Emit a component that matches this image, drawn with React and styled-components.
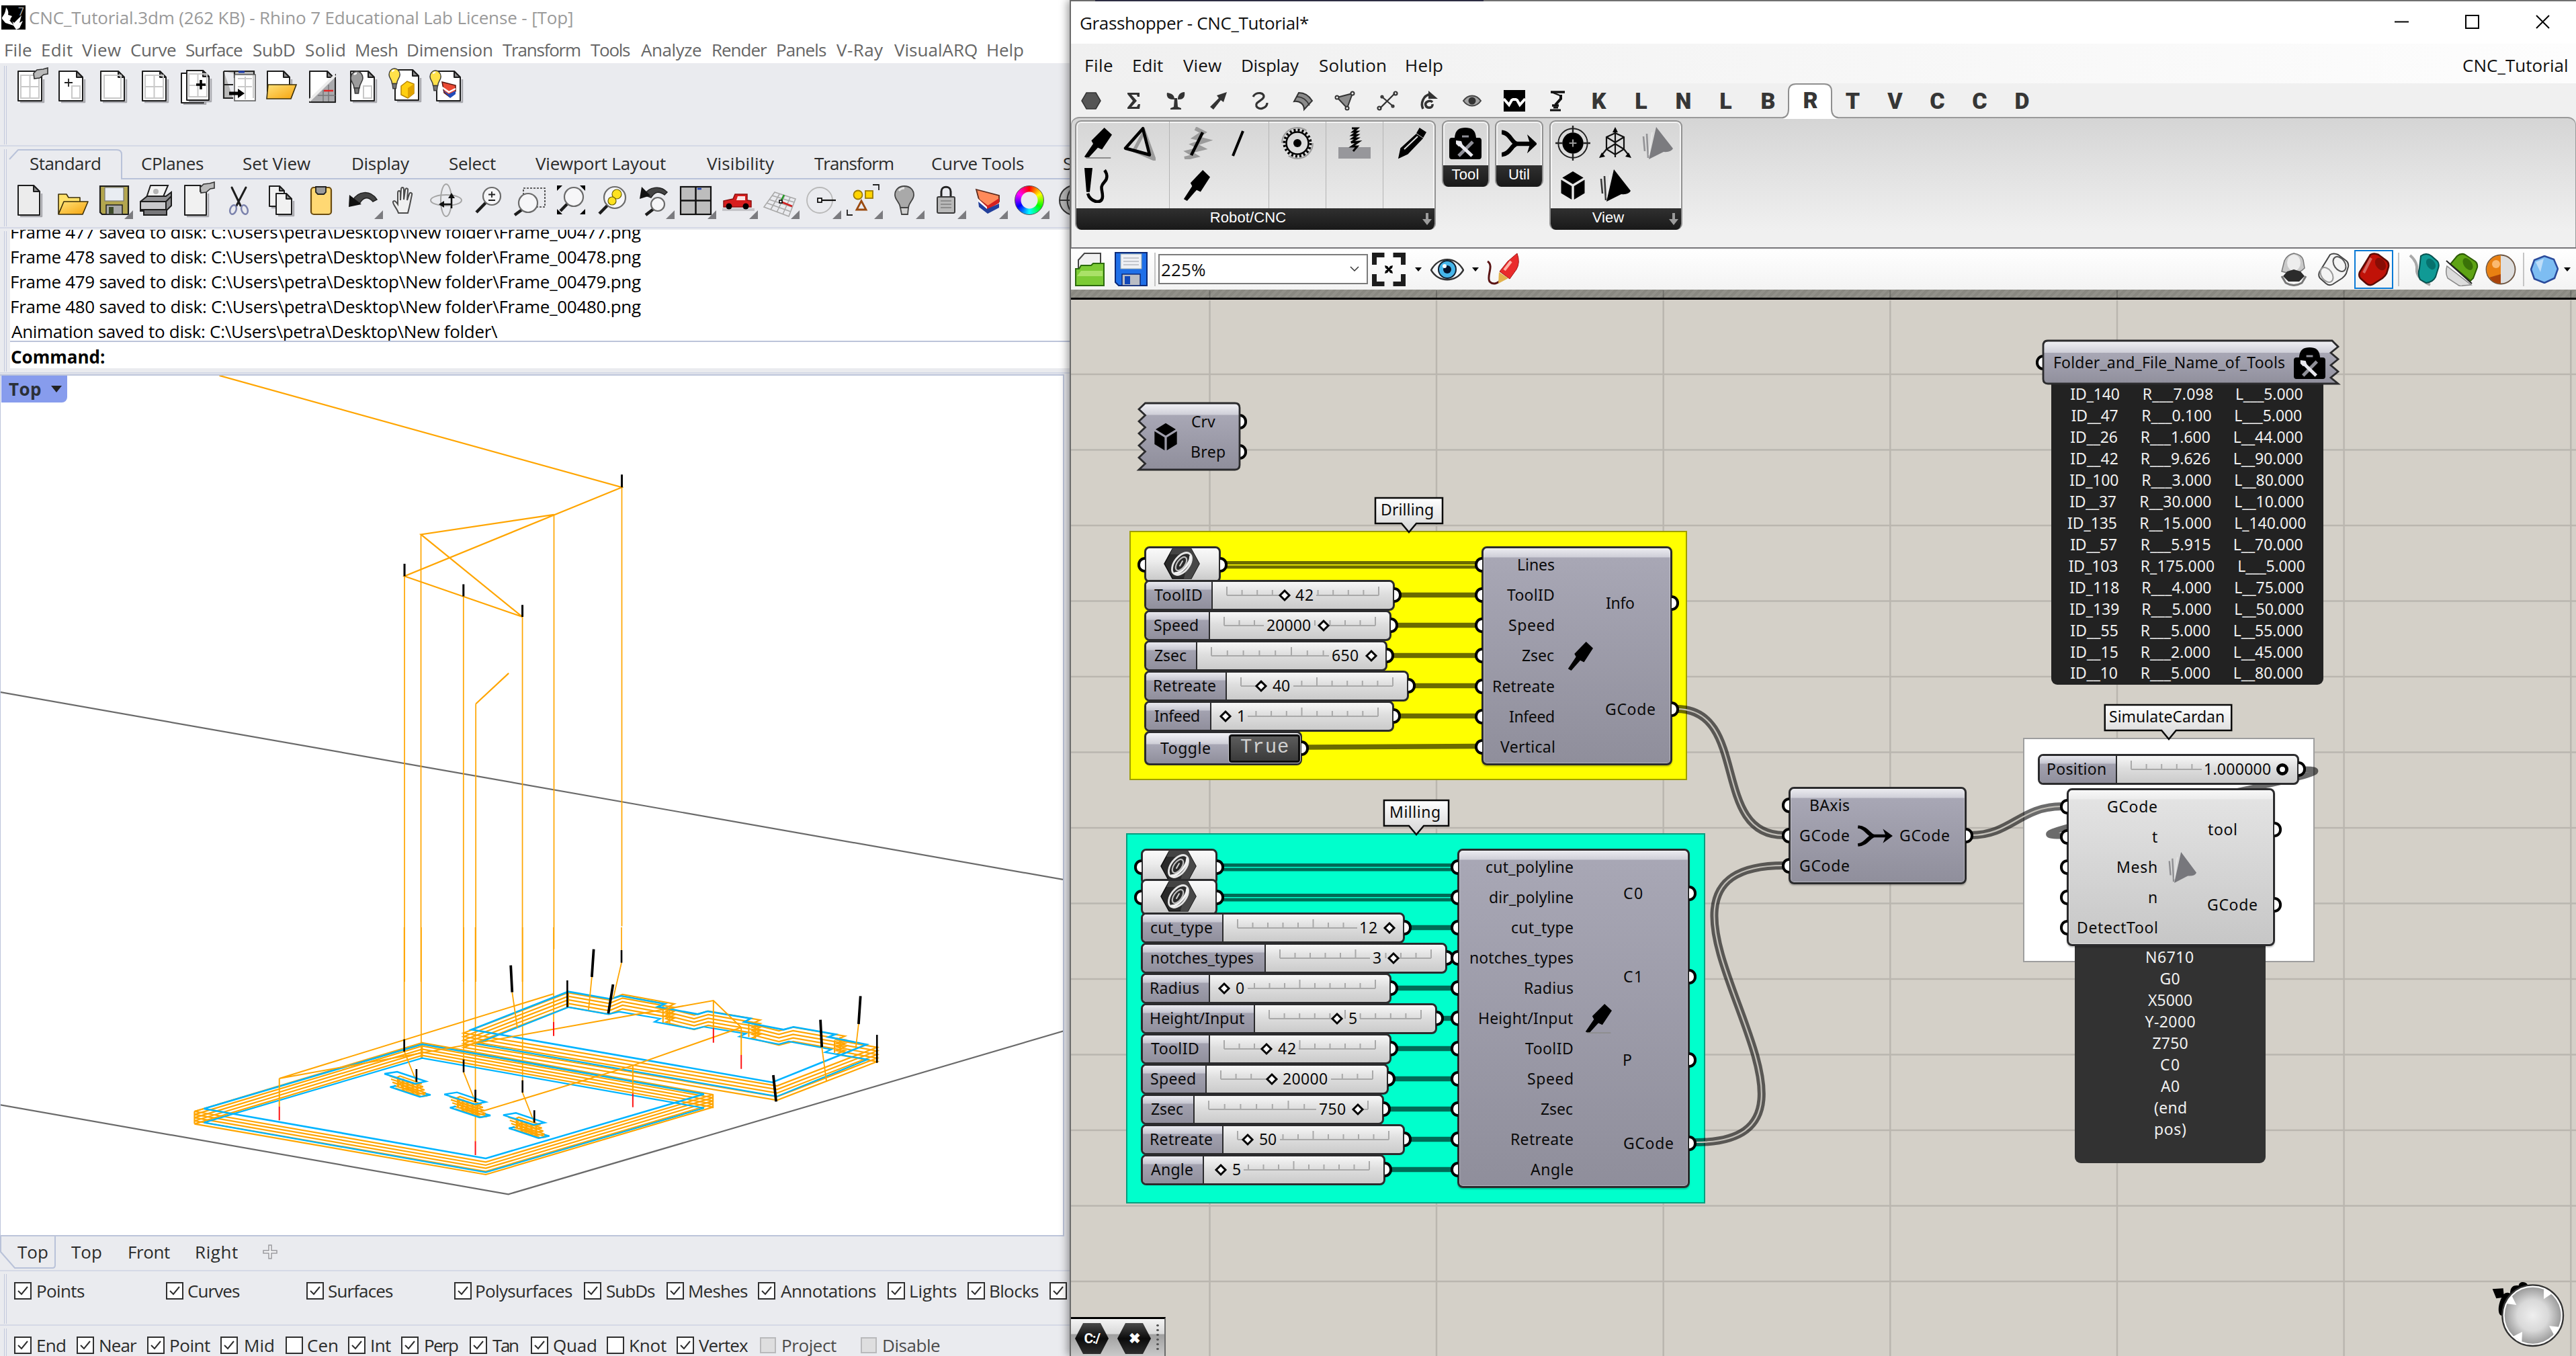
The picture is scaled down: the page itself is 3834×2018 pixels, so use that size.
import React from "react";
import styled, { createGlobalStyle } from "styled-components";

const UI = '"Open Sans", "Noto Sans", sans-serif';
const NODE = '"Noto Sans", "Open Sans", sans-serif';

const GlobalStyle = createGlobalStyle`
  * { box-sizing: border-box; }
  body { margin: 0; background: #eaebef; font-family: ${UI}; }
  svg { display: block; flex: none; }
`;

/* ---------- text fitted to a run width ---------- */

const ctx = document.createElement("canvas").getContext("2d");

const Run = styled.span`
  display: block;
  flex: none;
  white-space: pre;
  font-family: ${(p) => p.$family};
  font-size: ${(p) => p.$size}px;
  font-weight: ${(p) => p.$weight};
  line-height: ${(p) => p.$size + 10}px;
  color: ${(p) => p.$color};
  letter-spacing: ${(p) => p.$track}px;
  width: ${(p) => p.$w}px;
  text-indent: ${(p) => p.$shift}px;
`;

function Fit({ w, size = 26, weight = 400, family = UI, color = "#2b2b2b", children }) {
  ctx.font = `${weight} ${size}px ${family}`;
  const m = ctx.measureText(children);
  const ink = m.actualBoundingBoxLeft + m.actualBoundingBoxRight;
  const track = children.length > 1 ? (w - ink) / (children.length - 1) : 0;
  return (
    <Run
      $family={family}
      $size={size}
      $weight={weight}
      $color={color}
      $w={w}
      $track={Math.round(track * 1000) / 1000}
      $shift={Math.round(m.actualBoundingBoxLeft * 100) / 100}
    >
      {children}
    </Run>
  );
}

const NodeText = (props) => <Fit size={23} family={NODE} color="#0a0a0a" {...props} />;

/* ---------- shell ---------- */

const Screen = styled.main`
  display: flex;
  width: 3834px;
  height: 2018px;
  overflow: hidden;
  background: #eaebef;
`;

const Rhino = styled.section`
  width: 1592px;
  height: 2018px;
  flex: none;
  display: flex;
  flex-direction: column;
  overflow: hidden;
`;

const Grasshopper = styled.section`
  width: 2242px;
  height: 2018px;
  flex: none;
  display: flex;
  flex-direction: column;
  border-left: 2px solid #6b6b6b;
  background: #f0f0f0;
  position: relative;
  z-index: 2;
  box-shadow: -3px 0 12px rgba(0, 0, 0, 0.4);
`;

/* a strip whose labels start at known stops */
const Stops = styled.div`
  display: flex;
  align-items: center;
  height: ${(p) => p.$h}px;
  padding-top: ${(p) => p.$pt || 0}px;
  flex: none;
  background: ${(p) => p.$bg || "transparent"};
  overflow: hidden;
`;
const Stop = styled.div`
  flex: none;
  margin-left: ${(p) => p.$gap}px;
  width: ${(p) => p.$w}px;
`;

function LabelStrip({ items, h, pt, bg, origin = 0, ...font }) {
  let at = origin;
  return (
    <Stops $h={h} $pt={pt} $bg={bg}>
      {items.map(([text, from, to], i) => {
        const gap = from - at;
        at = to;
        return (
          <Stop key={i} $gap={gap} $w={to - from}>
            <Fit w={to - from} {...font}>{text}</Fit>
          </Stop>
        );
      })}
    </Stops>
  );
}

/* ---------- Rhino pieces ---------- */

const TitleBar = styled.header`
  display: flex;
  align-items: center;
  gap: 6px;
  height: 54px;
  padding: 0 0 3px 2px;
  background: #fff;
  flex: none;
`;

const Band = styled.div`
  display: flex;
  flex: none;
  height: ${(p) => p.$h}px;
  border-bottom: ${(p) => (p.$last ? "0" : "2px solid #d5d9e6")};
  background: #eaebef;
  overflow: hidden;
`;
const GripBar = styled.div`
  flex: none;
  width: 4px;
  margin: 4px 0 1px 6px;
  border-left: 1px solid #c3c9dc;
  border-right: 1px solid #c3c9dc;
`;
const BandBody = styled.div`
  flex: 1;
  min-width: 0;
  padding-left: ${(p) => p.$pl || 0}px;
  padding-top: ${(p) => p.$pt || 0}px;
`;
const IconRow = styled.div`
  display: flex;
  width: 1700px;
`;
const TabStrip = styled.div`
  position: relative;
  height: 49px;
`;
const TabOutline = styled.svg`
  position: absolute;
  left: 0;
  top: 0;
`;
const History = styled.div`
  flex: 1;
  margin-left: 5px;
  background: #fff;
  display: flex;
  flex-direction: column;
`;
const HistoryLines = styled.div`
  height: 172px;
  padding-left: 2px;
  overflow: hidden;
  display: flex;
  flex-direction: column;
  justify-content: flex-end;
`;
const HistoryLine = styled.div`
  height: 37px;
  flex: none;
  display: flex;
  align-items: center;
`;
const CommandRow = styled.div`
  height: 41px;
  margin-top: -4px;
  border-top: 2px solid #bcc4da;
  padding: 4px 0 0 2px;
  display: flex;
  align-items: center;
`;
const ViewFrame = styled.div`
  position: relative;
  flex: none;
  width: 1584px;
  height: 1283px;
  margin-top: 1px;
  background: #fff;
  border: 1px solid #bcc4da;
  border-width: 2px 2px 2px 1px;
`;
const ViewBadge = styled.div`
  position: absolute;
  left: 1px;
  top: 0;
  width: 98px;
  height: 40px;
  padding-left: 11px;
  display: flex;
  align-items: center;
  gap: 15px;
  background: #879ced;
  border-bottom-right-radius: 8px;
`;
const ViewTabs = styled.div`
  position: relative;
  flex: none;
  height: 52px;
  border-bottom: 2px solid #d5d9e6;
`;
const Box = styled.div`
  flex: none;
  width: ${(p) => (p.$off ? 24 : 26)}px;
  height: ${(p) => (p.$off ? 24 : 26)}px;
  margin-left: ${(p) => p.$gap}px;
  border: 2px solid ${(p) => (p.$off ? "#b9b9bb" : "#2f2f2f")};
  background: ${(p) => (p.$off ? "#dededf" : "#fff")};
`;
const CheckRow = styled.div`
  display: flex;
  align-items: center;
  width: 1700px;
  height: ${(p) => p.$h}px;
`;

function Checks({ items, h, origin }) {
  let at = origin;
  return (
    <CheckRow $h={h}>
      {items.map(([text, x, from, to, state], i) => {
        const off = state === "off";
        const boxW = off ? 24 : 26;
        const gap = x - at;
        at = to || x + boxW;
        return (
          <React.Fragment key={i}>
            <Box $gap={gap} $off={off}>
              {!state && (
                <svg width="22" height="22" viewBox="0 0 22 22">
                  <path d="M4 11l5 5L18 5" fill="none" stroke="#2f2f2f" strokeWidth="2" />
                </svg>
              )}
            </Box>
            {text && (
              <Stop $gap={from - x - boxW} $w={to - from}>
                <Fit w={to - from} color={off ? "#4c4c4c" : "#2b2b2b"}>{text}</Fit>
              </Stop>
            )}
          </React.Fragment>
        );
      })}
    </CheckRow>
  );
}

/* ---------- Rhino icons ---------- */

const Page = ({ x = 14, y = 6, w = 35, h = 44, fold = 9, fill = "#fff" }) => (
  <g stroke="#1d1d1d" strokeWidth="2" strokeLinejoin="round">
    <path d={`M${x + 3} ${y + h + 2}h${w}V${y + fold + 3}`} fill="none" stroke="#a9a9ae" strokeWidth="2.5" />
    <path d={`M${x} ${y}h${w - fold}l${fold} ${fold}v${h - fold}h${-w}z`} fill={fill} />
    <path d={`M${x + w - fold} ${y}v${fold}h${fold}z`} fill="#8a8a8a" />
  </g>
);
const Hand = () => (
  <path d="M37 9l5-5 9-1 7-2v9l-6 1-6 5-8 1z" fill="#b9b9b9" stroke="#333" strokeWidth="1.6" />
);
const Frames = ({ x = 18, y = 12 }) => (
  <path d={`M${x} ${y}h27v34h-27zM${x} ${y + 17}h27M${x + 13.5} ${y}v34`} fill="none" stroke="#c9c9c9" strokeWidth="2" />
);
const Bulb = ({ x = 0, y = 0, c = "#ffe14a", s = 1 }) => (
  <g transform={`translate(${x} ${y}) scale(${s})`} stroke="#3a3a3a" strokeWidth="1.6">
    <path d="M9 0a9 10 0 0 1 9 10c0 6-5 8-5 15H5c0-7-5-9-5-15A9 10 0 0 1 9 0z" fill={c} />
    <path d="M5.500 25h7l-1 8h-5z" fill="#777" />
    <path d="M5 5a5 5 0 0 1 4-2" fill="none" stroke="#fff" strokeWidth="2.500" />
  </g>
);
const Folder = ({ x = 0, y = 0 }) => (
  <g transform={`translate(${x} ${y})`} stroke="#3b2f0a" strokeWidth="1.6" strokeLinejoin="round">
    <path d="M1 4h12l3 5h17v8H10L1 33z" fill="#ffe16b" />
    <path d="M9 15h36l-8 19H1z" fill="url(#amber)" />
  </g>
);
const Lens = ({ x, y, r = 13, hx, hy }) => (
  <g>
    <path d={`M${x - r * 0.7} ${y + r * 0.75}L${hx} ${hy}`} stroke="#1c1c1c" strokeWidth="4.5" />
    <circle cx={x} cy={y} r={r} fill="#f6f6f8" stroke="#6b6b6b" strokeWidth="2.200" />
  </g>
);

const topIcons = [
  <g><Page /><Frames /><Hand /></g>,
  <g><Page x={13} /><path d="M27 17v12M21 23h12" stroke="#222" strokeWidth="1.800" /><rect x="32" y="28" width="12" height="18" fill="none" stroke="#c9c9c9" strokeWidth="2" /></g>,
  <g><Page x={13} /><rect x="18" y="12" width="25" height="34" fill="none" stroke="#c9c9c9" strokeWidth="2" /></g>,
  <g><Page x={13} /><Frames x={17} /></g>,
  <g><Page x={9} y={9} w={33} /><Page x={17} y={5} w={33} /><Frames x={20} y={10} /><path d="M38 19v14M31 26h14" stroke="#000" strokeWidth="3.600" /></g>,
  <g><path d="M10 6h45v10M10 6v40h14M10 26h14M26 6v10" fill="#b9b9b9" stroke="#222" strokeWidth="2.200" /><path d="M32 7h9" stroke="#1e3fb0" strokeWidth="3" /><rect x="26" y="11" width="31" height="39" fill="#fff" stroke="#555" strokeWidth="1.5" /><path d="M31 17h21M31 29h21M42 14v34M54 12v34" stroke="#c9c9c9" strokeWidth="2" /><path d="M18 39h15" stroke="#000" strokeWidth="5" /><path d="M31 32l10 7-10 7z" /></g>,
  <g><Page x={13} w={33} h={30} /><path d="M14 26h42l-8 21H12z" fill="url(#amber)" stroke="#3b2f0a" strokeWidth="1.600" /></g>,
  <g><Page /><path d="M14 50L52 12v40H14z" fill="#a9a9ac" stroke="#222" strokeWidth="2" /><path d="M34 34v17M42 26v25M26 42h26" stroke="#77777a" strokeWidth="1.500" /><path d="M35 35h14" stroke="#e02424" strokeWidth="2.500" /><path d="M13 50L52 12" stroke="#ececec" strokeWidth="4" /></g>,
  <g><Page x={13} /><Bulb x={13} y={6} c="#9c9c9c" /><rect x="32" y="28" width="12" height="18" fill="none" stroke="#c9c9c9" strokeWidth="2" /></g>,
  <g><Page x={17} y={4} h={45} /><Bulb x={8} y={2} c="#ffe14a" s={0.9} /><path d="M26 28l9-7 10 4v14l-9 7-10-5z" fill="#ffcf10" stroke="#b98500" strokeWidth="1.500" /><path d="M36 31v15l9-7V25z" fill="#e0a200" /></g>,
  <g><Page x={17} y={6} h={44} /><Bulb x={7} y={5} c="#ffe14a" s={0.9} /><path d="M25 22l20 5v9l-9 8-8-6z" fill="#ea4a34" stroke="#5a1710" strokeWidth="1.500" /><path d="M26 34l9 6 10-5v5l-8 6z" fill="#234bb8" /><path d="M25 30l10 7 10-5" stroke="#fff" strokeWidth="2.500" fill="none" /></g>,
];

const mainIcons = [
  [<Page x={14} w={32} fill="#ececec" />],
  [<Folder x={11} y={15} />],
  [<g><path d="M12 7h42v42H15l-3-3z" fill="#b3a64e" stroke="#1d1d1d" strokeWidth="2.200" /><rect x="19" y="9" width="28" height="20" fill="#e9edf2" stroke="#777" strokeWidth="1.200" /><rect x="21" y="35" width="24" height="14" fill="#a9a9a9" stroke="#222" strokeWidth="1.500" /><rect x="25" y="38" width="7" height="10" fill="#3d4a2a" /></g>, true],
  [<g stroke="#1d1d1d" strokeWidth="2"><path d="M19 24L25 6h26l-8 19z" fill="#f2f2f2" /><path d="M10 30l10-8h28l8-6v20l-8 8H10z" fill="#8f8f92" /><path d="M10 30h38v12H10z" fill="#c9c9cc" /><path d="M48 30l8-8" /><path d="M15 42h34v8H15z" fill="#77777a" /><circle cx="33" cy="15" r="4" fill="#b5b5b5" stroke="none" /></g>],
  [<g><Page x={14} w={32} fill="#f1f1f1" /><Hand /></g>],
  [<g fill="none" strokeLinecap="round"><path d="M22 9l13 27M43 9L29 36" stroke="#1d1d1d" strokeWidth="3" /><ellipse cx="24" cy="42" rx="4.500" ry="7" stroke="#7c83ad" strokeWidth="2.500" transform="rotate(20 24 42)" /><ellipse cx="41" cy="42" rx="4.500" ry="7" stroke="#7c83ad" strokeWidth="2.500" transform="rotate(-20 41 42)" /></g>],
  [<g><Page x={16} y={7} w={22} h={30} fill="#f1f1f1" fold={7} /><Page x={26} y={18} w={23} h={31} fill="#f1f1f1" fold={8} /></g>],
  [<g><rect x="16" y="9" width="30" height="40" rx="4" fill="#ffd873" stroke="#6b4c10" strokeWidth="2.200" /><path d="M23 8h15v8l-3 3h-9l-3-3z" fill="#9b9b9b" stroke="#222" strokeWidth="1.800" /></g>],
  [<g><path d="M16 28C24 14 42 12 52 27l-6 3c-7-8-14-7-20 3z" fill="#444" stroke="#222" strokeWidth="1.500" /><path d="M11 20l-1 18 19-4z" fill="#111" /></g>, true],
  [<path d="M22 47c-2-7-9-13-8-17 2-3 5 1 7 4V17c0-4 4-4 4 0v11l1-16c0-4 4-4 4 0v15l2-14c1-4 5-3 4 0l-1 15 3-9c1-4 5-2 4 1-2 9-3 16-6 27z" fill="#f0f0f0" stroke="#4c4c4c" strokeWidth="2" />],
  [<g fill="none"><ellipse cx="31" cy="28" rx="23" ry="8" stroke="#a5a5a5" strokeWidth="2" /><ellipse cx="31" cy="28" rx="8" ry="24" stroke="#a5a5a5" strokeWidth="2" /><path d="M39 40V22M39 34H22" stroke="#111" strokeWidth="2.500" /><path d="M39 17l-5 8h10zM20 34l8-5v10z" fill="#111" /></g>],
  [<g><Lens x={37} y={22} hx={14} hy={46} /><path d="M37 15v9M32 19.500h10M32 28h10" stroke="#222" strokeWidth="1.800" /></g>],
  [<g><rect x="22" y="10" width="32" height="28" fill="none" stroke="#333" strokeWidth="1.600" strokeDasharray="3 2" /><Lens x={29} y={32} hx={9} hy={50} r={14} /></g>],
  [<g><path d="M10 6h8l-8 8zM52 6h-8l8 8zM10 49h8l-8-8zM52 49h-8l8-8z" /><Lens x={35} y={23} hx={15} hy={44} r={14} /></g>],
  [<g><Lens x={34} y={24} hx={11} hy={48} r={16} /><circle cx="37" cy="19" r="7" fill="#ffe21f" stroke="#6b6000" strokeWidth="1.200" /><circle cx="30" cy="29" r="6" fill="#ffe21f" stroke="#6b6000" strokeWidth="1.200" /></g>],
  [<g><path d="M16 20C22 8 40 5 50 16l-4 4c-8-6-14-5-20 4z" fill="#444" stroke="#222" strokeWidth="1.500" /><path d="M12 8L9 26l16-5z" fill="#111" /><Lens x={36} y={34} hx={18} hy={50} r={10} /></g>, true],
  [<g><rect x="8" y="8" width="45" height="41" fill="#bdbdbd" stroke="#111" strokeWidth="2.200" /><path d="M30.500 8v41M8 28.500h45" stroke="#111" strokeWidth="2.500" /><path d="M33 11h6" stroke="#1e3fb0" strokeWidth="2.500" /></g>, true],
  [<g><path d="M8 42h48" stroke="#c5c5c9" strokeWidth="4" /><path d="M10 29l14-3 3-7h18v9l6 1v9H10z" fill="#d81e1e" stroke="#8f1010" strokeWidth="1.500" /><path d="M31 22h11v6H29z" fill="#fbe3e3" /><circle cx="18" cy="37" r="4.500" /><circle cx="43" cy="37" r="4.500" /></g>, true],
  [<g fill="none"><path d="M24 16l31 10-10 26-37-14zM16 27l34 11M20 21l33 10M12 32l36 13M31 19L18 42M39 21L27 46M47 24L36 49" stroke="#a9a9a9" strokeWidth="1.600" /><path d="M33 30l17 7" stroke="#d02020" strokeWidth="2.500" /><path d="M33 30l5-10" stroke="#259b25" strokeWidth="2.500" /><rect x="31" y="28" width="4" height="4" fill="#fff" stroke="#000" strokeWidth="1.500" /></g>, true],
  [<g fill="none"><circle cx="29" cy="28" r="19" stroke="#b9b9b9" strokeWidth="1.800" /><path d="M31 28h22" stroke="#111" strokeWidth="2.200" /><rect x="26" y="25" width="6" height="6" fill="#fff" stroke="#111" strokeWidth="1.800" /></g>, true],
  [<g strokeWidth="1.800"><path d="M46 5h9v8M8 42v8h8" fill="none" stroke="#222" /><circle cx="24" cy="20" r="6.500" fill="#ffd400" stroke="#9b7a00" /><rect x="35" y="14" width="11" height="11" fill="#ffd400" stroke="#9b7a00" /><path d="M29 29l7 13H22z" fill="none" stroke="#9a4a10" strokeWidth="2.800" /></g>, true],
  [<g stroke="#444" strokeWidth="1.800"><path d="M31 7c9 0 14 6 14 13 0 8-7 10-8 19H25c-1-9-8-11-8-19 0-7 5-13 14-13z" fill="#a9a9a9" /><path d="M25 39h12l-1 10h-9z" fill="#d0d0d0" /><path d="M23 14c2-3 5-4 8-4" stroke="#e6e6e6" strokeWidth="3" fill="none" /></g>, true],
  [<g><path d="M24 24V15c0-9 14-9 14 0v9" fill="none" stroke="#222" strokeWidth="3" /><rect x="18" y="23" width="26" height="24" rx="2" fill="#b9b9b9" stroke="#3a3a3a" strokeWidth="2" /><path d="M23 29h16M23 34h16M23 39h16" stroke="#8d8d8d" strokeWidth="2" /></g>, true],
  [<g><path d="M14 12l34 9v9L31 37 18 27z" fill="#ff8a5a" stroke="#5c2a1c" strokeWidth="1.800" /><path d="M18 27l13 9 17-11v7L31 42 18 33z" fill="#d42020" /><path d="M16 25l14 13v4L17 31z" fill="#fff" /><path d="M17 30l13 11 18-8v6L31 48 18 38z" fill="#223f9b" /></g>, true],
  [null, true],
  [<g><circle cx="36" cy="28" r="22" fill="#b5b5b5" stroke="#333" strokeWidth="2" /><path d="M14 28h44M36 6c-14 12-14 32 0 44" fill="none" stroke="#333" strokeWidth="2" /></g>],
];

const Wheel = styled.div`
  width: 44px;
  height: 44px;
  margin: 6px 9px;
  border-radius: 50%;
  border: 1px solid #555;
  background: radial-gradient(circle, #eaebef 0 12px, #0000 13px),
    conic-gradient(#f00, #ff0, #0f0, #0ff, #00f, #f0f, #f00);
`;
const ToolCell = styled.div`
  position: relative;
  width: 62px;
  height: 58px;
  flex: none;
`;
const Flyout = styled.i`
  position: absolute;
  right: 1px;
  bottom: 2px;
  width: 13px;
  height: 13px;
  background: #7b7b7f;
  clip-path: polygon(100% 0, 100% 100%, 0 100%);
`;

/* ---------- Rhino model ---------- */

const O = "#ffa500";
const B = "#00b4ff";
const G = "#6a6a6a";
const poly = (pts, dx = 0, dy = 0) =>
  "M" + pts.map(([x, y]) => `${x + dx},${y + dy}`).join("L") + "z";

const topPlate = [[62, 810], [525, 522], [1123, 745], [660, 1032]];
const notched = [
  [630, 457], [835, 287], [925, 320], [947, 306], [1040, 342], [1025, 355], [1110, 388], [1130, 375],
  [1222, 407], [1208, 423], [1292, 457], [1313, 445], [1402, 478], [1387, 490], [1468, 523], [1268, 692],
];
const notchedLow = [
  [640, 520], [835, 357], [920, 388], [943, 377], [1030, 408], [1018, 422], [1102, 455], [1122, 444],
  [1212, 475], [1198, 488], [1282, 522], [1303, 510], [1393, 545], [1380, 558], [1470, 590], [1278, 755],
];
const notchedOuter = [
  [613, 472], [835, 292], [922, 324], [950, 300], [1060, 342], [1042, 360], [1052, 366], [1102, 392], [1132, 374],
  [1242, 414], [1225, 430], [1236, 438], [1282, 462], [1312, 446], [1422, 486], [1404, 502], [1416, 508],
  [1490, 536], [1278, 708],
];

const Model = () => (
  <svg width="1581" height="1279" viewBox="1 559 1581 1279" fill="none">
    <g transform="translate(0 540) scale(1.0204 .4847)" strokeWidth="2.200">
      <path d="M0 1011L1552 1587" stroke={G} vectorEffect="non-scaling-stroke" />
      <path d="M320 39L907 382L590 655L762 780L614 527L808 466M742 953L694 1047" stroke={O} vectorEffect="non-scaling-stroke" />
      <path d="M590 655V1900M614 527V1900M676 717V1900M694 1047V1900M762 780V1900M808 466V1800M907 382V1730" stroke={O} strokeWidth="1.700" vectorEffect="non-scaling-stroke" />
      <path d="M907 343V382M590 617V655M676 680V717M762 743V780" stroke="#000" strokeWidth="3" vectorEffect="non-scaling-stroke" />
    </g>
    <g transform="translate(260 1380) scale(.70151 .33333)">
      {[
        ["M-370 793L708 1192L1886 463", G, 2.2],
        ["M487 0V555M523 0V585M613 0V647M638 0V955M738 0V738M804 0V422M948 0V102", O, 1.7],
        ...[0, 14, 28, 42, 56].map((d) => [poly([[42, 822], [525, 516], [1142, 747], [660, 1048]], 0, d), O, 2.2]),
        ["M42 822V877M1142 745V808M62 810L42 822M525 512V584", O, 2.2],
        ...[0, 16, 32, 48, 64].map((d) => [poly(notchedOuter, 0, d), O, 2.2]),
        ["M613 472V530M1490 536V600M835 287V357M1050 350V425M1232 420V495M1412 490V560M1036 352V430M1218 430V490M1400 505V560", O, 2.2],
        [poly(topPlate), B, 2.6],
        [poly(topPlate, 0, 62), B, 2.2],
        [poly(notched), B, 2.6],
        [poly(notchedLow), B, 2.2],
        ["M804 297L222 675L1143 327L1202 447L972 617L655 820M222 675V800M1143 327V450M1202 447V570M972 617V742", O, 2],
        ["M487 553L513 690M613 647L638 780M738 738L763 872M948 158L930 320M716 290L727 450M885 222L878 370M1451 432L1445 540M1373 535L1383 690", O, 1.8],
      ].map(([d, c, w], i) => (
        <path key={i} d={d} stroke={c} strokeWidth={w} vectorEffect="non-scaling-stroke" />
      ))}
      {[[0, 0], [127, 92], [252, 184]].map(([x, y], i) => (
        <g key={i} transform={`translate(${x} ${y})`}>
          {[0, 14, 28, 42, 54].map((d, k) => (
            <path key={k} d={`M${456 + k * 3} ${664 + d}l54 38l14 -4l-46 -34l-8 8l40 28`} stroke={O} strokeWidth="2.200" vectorEffect="non-scaling-stroke" />
          ))}
          <path d="M474 668V712M484 676V720M494 684V730M505 692V742M515 698V750" stroke={O} strokeWidth="3.400" vectorEffect="non-scaling-stroke" />
          <path d="M445 654L472 645L533 688L510 698z" stroke={B} strokeWidth="2.400" vectorEffect="non-scaling-stroke" />
          <path d="M470 708L457 713L520 757L543 748L532 742" stroke={B} strokeWidth="2.400" vectorEffect="non-scaling-stroke" />
        </g>
      ))}
      <path d="M804 422V485M1143 450V515M1202 570V632M972 742V803M222 800V862M638 955V1017" stroke="#ff1414" strokeWidth="2" vectorEffect="non-scaling-stroke" />
      <path d="M487 500V555M613 590V647M738 683V738M948 102V158M513 633V690M638 725V780M763 817V872M833 237V357M1490 480V605" stroke="#000" strokeWidth="2.600" vectorEffect="non-scaling-stroke" />
      <path d="M713 170L716 290M889 98L885 222M930 255L920 385M1455 307L1451 432M1370 413L1373 535M1270 660L1276 778" stroke="#000" strokeWidth="3.800" vectorEffect="non-scaling-stroke" />
    </g>
  </svg>
);

/* ---------- Grasshopper icons ---------- */

const Icon = ({ s = 48, w, h, vb = "0 0 48 48", children }) => (
  <svg width={w || s} height={h || s} viewBox={vb} preserveAspectRatio="none">{children}</svg>
);
const Router = ({ base, w, h }) => (
  <Icon w={w} h={h}>
    <path d="M35 0L48 11 31 34 24 31 7 48 1 45 16 25 13 20z" />
    {base && <path d="M4 47h42" stroke="#8d8d8d" strokeWidth="2" />}
  </Icon>
);
const Cube = ({ w, h }) => (
  <Icon w={w} h={h}>
    <path d="M24 2L42 12 24 22 6 12zM4 15l18 10v21L4 36zM44 15L26 25v21l18-10z" />
  </Icon>
);
const Cone = ({ c = "#000", w, h }) => (
  <Icon w={w} h={h}>
    <path d="M22 0L47 32Q44 38 33 37L11 48z" fill={c} />
    <path d="M8 10l2 36M3 14l2 22" stroke={c} strokeWidth="2.600" opacity=".75" />
    <path d="M16 8L11 42" stroke="#fff" strokeWidth="1.300" opacity=".5" />
  </Icon>
);
const Merge = ({ w, h }) => (
  <Icon w={w} h={h}>
    <path d="M2 5c12 1 14 19 22 19h16M2 43c12-1 14-19 22-19" fill="none" stroke="#000" strokeWidth="6.500" />
    <path d="M35 9l13 15-13 15 4-15z" />
  </Icon>
);
const ToolCase = ({ w, h }) => (
  <Icon w={w} h={h}>
    <path d="M8 16C9 4 15 1 24 1s15 3 16 15h4q4 0 4 4v24q0 4-4 4H4q-4 0-4-4V20q0-4 4-4z" />
    <path d="M19 14h10" stroke="#8f8f98" strokeWidth="3" />
    <path d="M14 43L35 22" stroke="#8f8f98" strokeWidth="5" />
    <path d="M15 25L34 43" stroke="#e8e8ee" strokeWidth="5" />
    <path d="M10 20l8 1 2 6-6 2-4-4z" fill="#e8e8ee" />
  </Icon>
);
const HexCurve = () => (
  <svg width="54" height="46" viewBox="0 0 54 46">
    <path d="M13 1h28l12 22-12 22H13L1 23z" fill="#2b2b2b" stroke="#0d0d0d" strokeWidth="1.500" />
    <path d="M41 1l12 22-12 22H30z" fill="#474747" />
    <path d="M13 1h28l4 8H9z" fill="#444" />
    <g fill="none" strokeLinecap="round">
      <ellipse cx="27" cy="23" rx="19" ry="11" transform="rotate(-52 27 23)" stroke="#e6e6e6" strokeWidth="2.800" />
      <path d="M17 37C26 38 40 22 40 12" stroke="#f2f2f2" strokeWidth="3.600" />
      <ellipse cx="26" cy="23" rx="11.500" ry="6" transform="rotate(-55 26 23)" stroke="#bdbdbd" strokeWidth="2.200" />
      <path d="M24 26l4-7" stroke="#cfcfcf" strokeWidth="2" />
    </g>
  </svg>
);

const ribbonIcons = {
  mill: <Router base w={42} h={46} />,
  tri: <Icon h={52}><path d="M31 8L16 34l30 12z" fill="none" stroke="#9b9b9b" strokeWidth="5" /><path d="M29 4L3 31l36 9z" fill="none" stroke="#000" strokeWidth="4.500" strokeLinejoin="round" /></Icon>,
  path: <Icon><path d="M6 47l16-4-10-6 20-5-12-6 18-6-16-4 12-8-12-6" fill="none" stroke="#9b9b9b" strokeWidth="6" /><path d="M16 42L33 8" stroke="#000" strokeWidth="4.500" /></Icon>,
  line: <Icon><path d="M16 43L31 6" stroke="#000" strokeWidth="4" /></Icon>,
  saw: <Icon><circle cx="24" cy="24" r="23" fill="none" stroke="#9b9b9b" strokeWidth="2" strokeDasharray="50 22" /><circle cx="24" cy="24" r="19.500" fill="none" stroke="#000" strokeWidth="4" strokeDasharray="3 3.120" /><circle cx="24" cy="24" r="16.500" fill="none" stroke="#000" strokeWidth="2.500" /><circle cx="24" cy="24" r="6" /></Icon>,
  drill: <Icon><path d="M0 30h48v17H0z" fill="#97979b" /><path d="M20 2h8l-6 5h6l-7 5h7l-7 5h7l-9 6 11-1-10 7h8l-6 7" fill="none" stroke="#000" strokeWidth="3" /></Icon>,
  pencil: <Icon><path d="M36 2l9 6-4 7-9-6zM31 11l9 6-22 23-13 6 3-14z" stroke="#000" strokeWidth="1.500" /><path d="M13 33l20-19" stroke="#ddd" strokeWidth="2" /></Icon>,
  pen: <Icon w={48} h={52}><path d="M4 0h12l-4 33H7z" /><path d="M9 35c3 12 22 16 22 4 0-10-5-12 3-20 5-5 4-11 0-16" fill="none" stroke="#000" strokeWidth="4.500" /></Icon>,
  router: <Router w={40} h={46} />,
  tool: <ToolCase />,
  util: <Icon s={52}><path d="M0 9c12 1 14 16 22 16h18M0 40c12-1 14-15 22-15" fill="none" stroke="#000" strokeWidth="6" /><path d="M35 12l14 13-14 13 4-13z" /></Icon>,
  target: <Icon s={52}><circle cx="24" cy="24" r="20" fill="none" stroke="#222" strokeWidth="1.800" /><circle cx="24" cy="24" r="14.500" /><path d="M24 0v10M24 38v10M0 24h10M38 24h10" stroke="#222" strokeWidth="2.200" /><path d="M24 19v10M19 24h10" stroke="#9b9b9b" strokeWidth="2" /></Icon>,
  axes: <Icon><path d="M24 3v42M11 15l13-6 13 6v18l-13 8-13-8zM11 15l13 8 13-8M11 33l13-8 13 8M11 33L3 43M37 33l8 10" fill="none" stroke="#111" strokeWidth="2.200" /><path d="M24 0l-4 8h8zM0 46l9-2-5-6zM48 46l-9-2 5-6z" /></Icon>,
  cone: <Cone c="#7b7b7f" />,
  cube: <Cube w={42} h={46} />,
  coneDark: <Cone />,
};

const tabIcons = [
  <path d="M9 4h14l7 12-7 12H9L2 16z" fill="#555" stroke="#333" strokeWidth="1.500" />,
  <path d="M7 4h18v6h-3l-1-3h-8l8 9-8 9h8l2-4h3l-1 7H7v-2l8-10L7 6z" fill="#333" />,
  <g fill="#333"><path d="M14 14C3 15 2 8 3 4c8 1 11 4 11 10zM19 14c0-6 3-11 10-11 1 6-1 12-10 11z" /><path d="M14 12h4l1 13 5 2v2H8v-2l5-2z" /></g>,
  <path d="M4 25L17 12l-3-4 15-5-5 15-4-3L9 29z" fill="#333" />,
  <path d="M5 10c4-9 20-6 15 2-4 5-12 6-10 12 3 7 16 3 16-5" fill="none" stroke="#333" strokeWidth="3.200" />,
  <g><path d="M10 4c9 0 15 4 20 12l-12 13C18 21 12 16 3 17z" fill="#8b8b8b" stroke="#333" strokeWidth="2" /><path d="M7 10c9 0 15 5 19 13" fill="none" stroke="#333" strokeWidth="1.500" /></g>,
  <g stroke="#333" strokeWidth="2"><path d="M4 11L27 5 19 27z" fill="#8b8b8b" /><circle cx="4" cy="11" r="2.500" fill="#fff" /><circle cx="27" cy="5" r="2.500" fill="#fff" /><circle cx="19" cy="27" r="2.500" fill="#fff" /></g>,
  <g stroke="#333" strokeWidth="2.200" fill="none"><path d="M5 27C12 20 18 14 27 5M9 11l14 12" /><circle cx="4" cy="27" r="2.500" /><circle cx="28" cy="5" r="2.500" /><circle cx="8" cy="10" r="1.500" /><circle cx="24" cy="24" r="1.500" /></g>,
  <g><path d="M6 28C2 20 6 8 17 6M20 18c-4-4-12 0-10 5s11 4 10-2" fill="none" stroke="#333" strokeWidth="3.600" /><path d="M14 1l14 12-14 0z" fill="#333" /></g>,
  <g><path d="M3 16C10 6 22 6 29 16 22 26 10 26 3 16z" fill="#a3a3a3" stroke="#444" strokeWidth="2" /><circle cx="16" cy="16" r="5.500" fill="#333" /></g>,
  <g><path d="M0 0h32v32H0z" fill="#000" /><path d="M0 13l8 9 4-7 2-1h4l2 1 4 7 8-9" fill="none" stroke="#fff" strokeWidth="4" /></g>,
  <g fill="none" stroke="#111"><path d="M28 3H7" strokeWidth="3.500" /><path d="M8 3l15 6" strokeWidth="2" /><path d="M22 7v6l-8 9" strokeWidth="4" /><path d="M9 23h10" strokeWidth="3.500" /><path d="M11 26h7" strokeWidth="3" /><path d="M6 30h16" strokeWidth="3" /></g>,
];
const tabLetters = ["K", "L", "N", "L", "B", "R", "T", "V", "C", "C", "D"];

/* ---------- Grasshopper chrome ---------- */

const WindowTop = styled.div`
  height: 2px;
  flex: none;
  background: linear-gradient(90deg, #6b6b6b 0 36px, #2c2c42 36px 614px, #707070 614px);
`;
const GhTitle = styled.header`
  height: 63px;
  flex: none;
  display: flex;
  align-items: center;
  justify-content: space-between;
  padding: 0 39px 0 14px;
  background: #fff;
`;
const Controls = styled.div`
  display: flex;
  align-items: center;
  gap: 84px;
  padding-bottom: 3px;
`;
const GhMenu = styled.nav`
  height: 59px;
  flex: none;
  display: flex;
  align-items: center;
  justify-content: space-between;
  padding-right: 13px;
  background: linear-gradient(90deg, #f0f0f0, #fdfdfd);
`;
const Owner = styled.div`
  padding-top: 4px;
`;
const GhTabs = styled.div`
  height: 50px;
  flex: none;
  display: flex;
  margin-left: -2px;
`;
const GhTab = styled.div`
  position: relative;
  width: 63px;
  height: 50px;
  flex: none;
  display: flex;
  align-items: center;
  justify-content: center;
  padding-top: ${(p) => (p.$active ? 0 : 2)}px;
`;
const TabShape = styled.svg`
  position: absolute;
  left: -10px;
  top: 0;
  z-index: 1;
`;
const Letter = styled.b`
  position: relative;
  z-index: 2;
  font: 900 34px/36px Roboto, "Liberation Sans", sans-serif;
  color: #363636;
`;
const Ribbon = styled.div`
  height: 194px;
  flex: none;
  display: flex;
  align-items: flex-start;
  gap: 8.500px;
  padding: 3px 5px;
  border: solid #9a9a9a;
  border-width: 2px 1px 0;
  border-radius: 12px 12px 0 0;
  background: linear-gradient(#d5d5d5, #f0f0f0 88%);
`;
const Group = styled.div`
  width: ${(p) => p.$w}px;
  height: ${(p) => p.$h}px;
  flex: none;
  display: flex;
  flex-direction: column;
  border: 2px solid #929292;
  border-bottom: 0;
  border-radius: 9px;
  box-shadow: inset 0 0 0 2px #f4f4f4;
  overflow: hidden;
`;
const Sections = styled.div`
  flex: 1;
  display: flex;
`;
const Section = styled.div`
  width: ${(p) => p.$w}px;
  padding: 0 0 0 ${(p) => p.$pl || 0}px;
  display: grid;
  grid-template-columns: repeat(${(p) => p.$cols}, ${(p) => p.$cell || 62}px);
  grid-auto-rows: 63px;
  align-content: start;
  border-right: ${(p) => (p.$end ? "0" : "1px solid #b4b4b4")};
  > * { display: flex; align-items: center; justify-content: center; }
`;
const Slot = styled.div`
  width: ${(p) => p.$w || 62}px;
  height: 63px;
`;
const Caption = styled.div`
  position: relative;
  height: 32px;
  margin: 0 -2px;
  display: flex;
  align-items: center;
  justify-content: center;
  padding-bottom: 4px;
  padding-right: ${(p) => (p.$more ? 22 : 0)}px;
  background: linear-gradient(#303030, #191919);
  font: 22px/26px "Liberation Sans", Arial, sans-serif;
  letter-spacing: 0.1px;
  color: #fff;
`;
const More = styled.svg`
  position: absolute;
  right: 5px;
  top: 6px;
`;
const Toolbar = styled.div`
  height: 63px;
  flex: none;
  display: flex;
  align-items: center;
  border-top: 2px solid #77767a;
  background: linear-gradient(#fff, #f3f3f3);
`;
const Tool = styled.div`
  flex: none;
  margin-left: ${(p) => p.$gap || 0}px;
  width: ${(p) => p.$w}px;
  display: flex;
  align-items: center;
  justify-content: center;
`;
const Rule = styled.div`
  width: 2px;
  height: 50px;
  margin-left: ${(p) => p.$gap}px;
  background: #c5c5c5;
`;
const ZoomBox = styled.div`
  width: 312px;
  height: 45px;
  margin-left: 4px;
  padding: 0 11px 0 3px;
  display: flex;
  align-items: center;
  justify-content: space-between;
  background: #fff;
  border: 2px solid #7b7b7b;
`;
const Chosen = styled.div`
  width: 58px;
  height: 58px;
  margin-left: 6px;
  border: 2px solid #0a7ad6;
  display: flex;
  align-items: center;
  justify-content: center;
`;
const Drop = styled.i`
  width: 0;
  height: 0;
  flex: none;
  margin-left: ${(p) => p.$gap}px;
  border: 5px solid transparent;
  border-top: 6px solid #000;
  border-bottom: 0;
`;
const Push = styled.div`
  flex: 1;
`;

/* ---------- canvas ---------- */

const Canvas = styled.div`
  position: relative;
  flex: 1;
  overflow: hidden;
  background: #d4d0c8;
`;
const Hatch = styled.div`
  height: 15px;
  border-bottom: 3px solid #000;
  background: repeating-linear-gradient(135deg, #92918a 0 4px, #898881 4px 8px);
`;
const World = styled.div`
  position: absolute;
  left: -1595px;
  top: -431px;
  width: 3835px;
  height: 2018px;
`;
const Layer = styled.svg`
  position: absolute;
  left: 0;
  top: 0;
`;
const Area = styled.div`
  position: absolute;
  left: ${(p) => p.$x}px;
  top: ${(p) => p.$y}px;
  width: ${(p) => p.$w}px;
  height: ${(p) => p.$h}px;
  background: ${(p) => p.$bg || "none"};
  border: 2px solid ${(p) => p.$line || "rgba(0,0,0,.38)"};
`;
const Place = styled.div`
  position: absolute;
  left: ${(p) => p.$x}px;
  top: ${(p) => p.$y}px;
`;

const steel = "linear-gradient(#f2f2f6 0, #cfcfd8 16px, #a8a7b5 17px, #8f8e9b 100%)";
const silver = "linear-gradient(#fafafa 0, #ececec 16px, #e3e3e3 17px, #c6c6c6 100%)";

const Body = styled.div`
  position: absolute;
  left: ${(p) => p.$x}px;
  top: ${(p) => p.$y}px;
  width: ${(p) => p.$w}px;
  height: ${(p) => p.$h}px;
  padding: 2px 0;
  display: grid;
  grid-template-columns: ${(p) => p.$in}px ${(p) => p.$mid}px 1fr;
  border: 3px solid #2b2b2d;
  border-radius: 8px;
  background: ${(p) => (p.$light ? silver : steel)};
  background-origin: border-box;
  box-shadow: 0 2px 2px rgba(0, 0, 0, 0.22), inset 0 0 0 1px rgba(255, 255, 255, 0.35);
`;
const Ports = styled.div`
  display: flex;
  flex-direction: column;
`;
const Port = styled.div`
  position: relative;
  flex: 1;
  display: flex;
  align-items: center;
  justify-content: ${(p) => (p.$out ? "flex-start" : "flex-end")};
`;
const Pin = styled.i`
  position: absolute;
  top: calc(50% - 11.500px);
  width: 11px;
  height: 23px;
  background: #fff;
  border: 4px solid #000;
  ${(p) =>
    p.$out
      ? "right: -13px; border-left: 0; border-radius: 0 12px 12px 0;"
      : "left: -13px; border-right: 0; border-radius: 12px 0 0 12px;"}
`;
const Mid = styled.div`
  display: flex;
  align-items: center;
  justify-content: center;
`;

function Component({ x, y, w, h, inEdge, mid, inputs, outputs, icon, light }) {
  return (
    <Body $x={x} $y={y} $w={w} $h={h} $in={inEdge} $mid={mid} $light={light}>
      <Ports>
        {inputs.map(([t, tw], i) => (
          <Port key={i}>
            <Pin />
            <NodeText w={tw}>{t}</NodeText>
          </Port>
        ))}
      </Ports>
      <Mid>{icon}</Mid>
      <Ports>
        {outputs.map(([t, tw], i) => (
          <Port key={i} $out>
            <NodeText w={tw}>{t}</NodeText>
            <Pin $out />
          </Port>
        ))}
      </Ports>
    </Body>
  );
}

const ParamBody = styled.div`
  position: absolute;
  left: ${(p) => p.$x}px;
  top: ${(p) => p.$y}px;
  width: 114px;
  height: 54px;
  padding: 0 2px 2px 0;
  display: flex;
  align-items: center;
  justify-content: center;
  border: 3px solid #2b2b2d;
  border-radius: 8px;
  background: linear-gradient(#fafafa, #ececec 40%, #c9c9c9);
`;
const Param = ({ x, y }) => (
  <ParamBody $x={x} $y={y}>
    <Pin />
    <HexCurve />
    <Pin $out />
  </ParamBody>
);

const SliderBody = styled.div`
  position: absolute;
  left: ${(p) => p.$x}px;
  top: ${(p) => p.$y}px;
  width: ${(p) => p.$w}px;
  height: 45.500px;
  display: flex;
  border: 3px solid #2b2b2d;
  border-radius: 8px;
  background: linear-gradient(#f7f7f7, #dedede 45%, #cbcbcb);
`;
const SliderName = styled.div`
  width: ${(p) => p.$w}px;
  flex: none;
  display: flex;
  align-items: center;
  padding-left: 12px;
  border-right: 2px solid #2b2b2d;
  border-radius: 5px 0 0 5px;
  background: linear-gradient(#e9e9ef, #c6c6d0 11px, #a3a2b0 12px, #908f9c);
`;
const Track = styled.div`
  position: relative;
  flex: 1;
`;
const Value = styled.div`
  position: absolute;
  left: ${(p) => p.$x}px;
  top: 3px;
`;

function Slider({ x, cy, div, right, name, nw, knob, value, vx, vw, round }) {
  const w = right - x + 1;
  const left = div + 22;
  const end = right - 23;
  const base = div + 1;
  const clear = (px) => (px > vx - 5 && px < vx + vw + 5) || Math.abs(px - knob) < 9;
  const ticks = Array.from({ length: 11 }, (_, i) => left + ((end - left) * i) / 10);
  const lo = Math.min(vx - 5, knob - 8);
  const hi = Math.max(vx + vw + 5, knob + 8);
  return (
    <SliderBody $x={x} $y={cy - 22.5} $w={w}>
      <SliderName $w={div - x - 2}>
        <NodeText w={nw}>{name}</NodeText>
      </SliderName>
      <Track>
        <svg width={right - div - 4} height="40" viewBox={`${base} 0 ${right - div - 4} 40`}>
          <g stroke="#a9a9a9" strokeWidth="2">
            {lo > left && <path d={`M${left} 20H${lo}`} />}
            {hi < end && <path d={`M${hi} 20H${end}`} />}
            {ticks.map((t, i) => !clear(t) && <path key={i} d={`M${t} 20V${i % 5 ? 12 : 7}`} />)}
          </g>
          {round ? (
            <circle cx={knob} cy="20" r="6.500" fill="#fff" stroke="#000" strokeWidth="5" />
          ) : (
            <path d={`M${knob} 13l7 7-7 7-7-7z`} fill="#fff" stroke="#000" strokeWidth="3" />
          )}
        </svg>
        <Value $x={vx - base}>
          <NodeText w={vw}>{value}</NodeText>
        </Value>
        <Pin $out />
      </Track>
    </SliderBody>
  );
}

const ToggleBody = styled.div`
  position: absolute;
  left: 1704px;
  top: 1088px;
  width: 235px;
  height: 51px;
  display: flex;
  align-items: center;
  justify-content: space-between;
  padding-left: 21px;
  border: 3px solid #2b2b2d;
  border-radius: 8px;
  background: ${steel};
`;
const ToggleValue = styled.div`
  width: 106px;
  height: 42px;
  padding-bottom: 3px;
  display: flex;
  align-items: center;
  justify-content: center;
  border: 3px solid #0d0d0d;
  outline: 1px solid #c9c9d0;
  border-radius: 4px;
  background: linear-gradient(#5c5c5c, #3a3a3a);
`;

const Tag = ({ x, y, w, tip, text, tx, tw }) => (
  <>
    <Place $x={x} $y={y}>
      <svg width={w + 4} height="56" viewBox="-2 -2 104 56" preserveAspectRatio="none">
        <path
          d={`M0 0H100V38H${((tip - x + 11) / w) * 100}L${((tip - x) / w) * 100} 51L${((tip - x - 11) / w) * 100} 38H0z`}
          fill="url(#tag)"
          stroke="#0a0a0a"
          strokeWidth="2.500"
          vectorEffect="non-scaling-stroke"
        />
      </svg>
    </Place>
    <Place $x={tx} $y={y + 3}>
      <NodeText w={tw}>{text}</NodeText>
    </Place>
  </>
);

const Message = styled.div`
  position: absolute;
  left: ${(p) => p.$x}px;
  top: ${(p) => p.$y}px;
  width: ${(p) => p.$w}px;
  height: ${(p) => p.$h}px;
  padding-top: ${(p) => p.$pt}px;
  border-radius: 0 0 9px 9px;
  background: ${(p) => p.$bg};
  display: flex;
  flex-direction: column;
  align-items: ${(p) => p.$align || "stretch"};
`;
const MessageLine = styled.div`
  height: 31.930px;
  flex: none;
  display: flex;
  align-items: center;
`;

const tools = [
  ["ID_140", 317, 509, "R___7.098", 603, 870, "L___5.000", 964, 1222],
  ["ID__47", 321, 503, "R___0.100", 599, 866, "L___5.000", 960, 1218],
  ["ID__26", 317, 501, "R___1.600", 595, 862, "L__44.000", 956, 1222],
  ["ID__42", 317, 501, "R___9.626", 595, 862, "L__90.000", 956, 1222],
  ["ID_100", 314, 505, "R___3.000", 599, 866, "L__80.000", 960, 1226],
  ["ID__37", 314, 496, "R__30.000", 591, 866, "L__10.000", 960, 1226],
  ["ID_135", 306, 496, "R__15.000", 591, 866, "L_140.000", 960, 1234],
  ["ID__57", 317, 499, "R___5.915", 595, 861, "L__70.000", 956, 1222],
  ["ID_103", 310, 500, "R_175.000", 595, 878, "L___5.000", 973, 1230],
  ["ID_118", 314, 505, "R___4.000", 599, 866, "L__75.000", 960, 1226],
  ["ID_139", 314, 505, "R___5.000", 599, 866, "L__50.000", 960, 1226],
  ["ID__55", 317, 501, "R___5.000", 595, 862, "L__55.000", 956, 1222],
  ["ID__15", 317, 501, "R___2.000", 595, 862, "L__45.000", 956, 1222],
  ["ID__10", 317, 501, "R___5.000", 595, 862, "L__80.000", 956, 1222],
];
const unit = 1 / 2.6133;

function ToolRow({ row }) {
  const cells = [0, 3, 6].map((i) => [row[i], row[i + 1] * unit, row[i + 2] * unit]);
  let at = 243 * unit;
  return (
    <MessageLine>
      {cells.map(([t, a, b], i) => {
        const gap = a - at;
        at = b;
        return (
          <Stop key={i} $gap={gap} $w={b - a}>
            <NodeText w={b - a} color="#f0f0f0">{t}</NodeText>
          </Stop>
        );
      })}
    </MessageLine>
  );
}

const drillSliders = [
  ["ToolID", 71, 1805, 2076, 1913, "42", 1929, 26],
  ["Speed", 65, 1801, 2071, 1971, "20000", 1887, 65],
  ["Zsec", 48, 1782, 2065, 2042, "650", 1984, 39],
  ["Retreate", 91, 1826, 2097, 1878, "40", 1895, 26],
  ["Infeed", 67, 1803, 2075, 1825, "1", 1844, 9],
];
const millSliders = [
  ["cut_type", 91, 1821, 2091, 2069, "12", 2026, 24],
  ["notches_types", 152, 1884, 2154, 2075, "3", 2045, 11],
  ["Radius", 71, 1801, 2071, 1823, "0", 1841, 12],
  ["Height/Input", 139, 1868, 2139, 1991, "5", 2009, 11],
  ["ToolID", 71, 1801, 2071, 1886, "42", 1903, 26],
  ["Speed", 66, 1796, 2067, 1894, "20000", 1911, 66],
  ["Zsec", 48, 1778, 2060, 2022, "750", 1965, 39],
  ["Retreate", 91, 1821, 2091, 1858, "50", 1876, 25],
  ["Angle", 62, 1792, 2062, 1818, "5", 1836, 11],
];

const wire2 = "M2524 1700C2805 1700 2367 1288 2656 1288";
const wire1 = "M2496 1055C2606 1055 2546 1243 2656 1243";
const wire3 = "M2934 1243C2994 1243 3008 1200 3070 1200";

const vLines = [1801.5, 2139, 2476.7, 2814.3, 3152, 3489.6, 3827.3];
const hLines = Array.from({ length: 13 }, (_, i) => 557 + i * 112.5);

const CornerDial = styled.svg`
  position: absolute;
  left: 3675px;
  top: 1860px;
`;
const Dock = styled.div`
  position: absolute;
  left: 1595px;
  top: 1960px;
  width: 141px;
  height: 58px;
  padding: 6px 0 0 6px;
  display: flex;
  gap: 13px;
  border-top: 3px solid #000;
  border-right: 2px solid #6b6b6b;
  background: linear-gradient(#f4f4f4 0, #d9d9d9 22px, #9f9f9f 23px, #c9c9c9 100%);
`;
const HexButton = styled.div`
  width: 50px;
  height: 46px;
  display: flex;
  align-items: center;
  justify-content: center;
  background: linear-gradient(#4a4a4a, #0b0b0b 50%, #2e2e2e);
  clip-path: polygon(24% 0, 76% 0, 100% 50%, 76% 100%, 24% 100%, 0 50%);
  font: bold 21px/24px Roboto, sans-serif;
  letter-spacing: -1.500px;
  color: #fff;
`;
const Dots = styled.div`
  width: 6px;
  height: 44px;
  margin-left: -6px;
  background: radial-gradient(circle, #555 1.500px, transparent 2px) 0 0 / 6px 7px;
`;

const Defs = () => (
  <svg width="0" height="0">
    <defs>
      <linearGradient id="amber" x1="0" y1="0" x2="1" y2="1">
        <stop offset="0" stopColor="#ffe27a" />
        <stop offset="1" stopColor="#f5a30c" />
      </linearGradient>
      <linearGradient id="tag" x1="0" y1="0" x2="0" y2="1">
        <stop offset="0" stopColor="#fff" />
        <stop offset="1" stopColor="#d4d4d4" />
      </linearGradient>
      <linearGradient id="steel" gradientUnits="userSpaceOnUse" x1="0" y1="0" x2="0" y2="100">
        <stop offset="0" stopColor="#f2f2f6" />
        <stop offset=".17" stopColor="#cfcfd8" />
        <stop offset=".18" stopColor="#a8a7b5" />
        <stop offset="1" stopColor="#8f8e9b" />
      </linearGradient>
      <linearGradient id="steelLow" gradientUnits="userSpaceOnUse" x1="0" y1="0" x2="0" y2="66">
        <stop offset="0" stopColor="#f2f2f6" />
        <stop offset=".27" stopColor="#cfcfd8" />
        <stop offset=".28" stopColor="#a8a7b5" />
        <stop offset="1" stopColor="#8f8e9b" />
      </linearGradient>
      <radialGradient id="dial">
        <stop offset="0" stopColor="#efefef" />
        <stop offset=".55" stopColor="#d9d9d9" />
        <stop offset="1" stopColor="#9c9c9c" />
      </radialGradient>
    </defs>
  </svg>
);
const HiddenDefs = styled.div`
  position: absolute;
  width: 0;
  height: 0;
  overflow: hidden;
`;

const JagNode = styled.div`
  position: absolute;
  left: ${(p) => p.$x}px;
  top: ${(p) => p.$y}px;
  width: ${(p) => p.$w}px;
  height: ${(p) => p.$h}px;
  display: flex;
  align-items: center;
  padding: ${(p) => p.$pad};
  gap: ${(p) => p.$gap}px;
`;
const JagShape = styled.svg`
  position: absolute;
  left: -4px;
  top: -4px;
`;
const Above = styled.div`
  position: relative;
  display: flex;
  flex-direction: column;
  gap: ${(p) => p.$gap || 0}px;
`;
const EdgePins = styled.div`
  position: absolute;
  top: 5px;
  bottom: 5px;
  ${(p) => (p.$out ? "right: 3px;" : "left: 3px;")}
  display: flex;
  flex-direction: column;
  > * { flex: 1; position: relative; }
`;
const PinSeat = styled.div``;

/* toolbar shapes */
const Solid = ({ c, d, w = 50 }) => (
  <svg width={w} height="50" viewBox="0 0 50 50">
    <path d="M20 3q5-3 12 0l12 9q4 3 3 9l-3 10q-2 4-6 7L24 47q-5 3-10-1L5 38q-3-3-1-9z" fill={c} stroke={d} strokeWidth="2.500" />
    <ellipse cx="35" cy="17" rx="7" ry="10" fill={d} opacity=".55" transform="rotate(-35 35 17)" />
    <path d="M10 30l11-22" stroke="#fff" strokeWidth="4" opacity=".35" />
  </svg>
);

const rhinoMenu = [
  ["File", 8, 47], ["Edit", 63, 108], ["View", 122, 180], ["Curve", 195, 262], ["Surface", 277, 361],
  ["SubD", 377, 439], ["Solid", 455, 513], ["Mesh", 530, 591], ["Dimension", 607, 732], ["Transform", 748, 863],
  ["Tools", 879, 938], ["Analyze", 954, 1044], ["Render", 1061, 1142], ["Panels", 1157, 1230],
  ["V-Ray", 1245, 1315], ["VisualARQ", 1331, 1454], ["Help", 1470, 1523],
];
const rhinoTabs = [
  ["Standard", 45, 149], ["CPlanes", 211, 303], ["Set View", 362, 462], ["Display", 525, 610], ["Select", 669, 738],
  ["Viewport Layout", 797, 991], ["Visibility", 1052, 1153], ["Transform", 1212, 1329], ["Curve Tools", 1387, 1524], ["S", 1583, 1597],
];
const viewTabs = [["Top", 26, 71], ["Top", 106, 151], ["Front", 192, 253], ["Right", 292, 354]];
const filters = [
  ["Points", 21, 56, 126], ["Curves", 247, 280, 357], ["Surfaces", 456, 489, 585], ["Polysurfaces", 676, 709, 852],
  ["SubDs", 869, 903, 975], ["Meshes", 992, 1026, 1113], ["Annotations", 1128, 1162, 1304], ["Lights", 1321, 1355, 1424],
  ["Blocks", 1440, 1474, 1546], ["", 1562],
];
const osnaps = [
  ["End", 21, 56, 97], ["Near", 114, 149, 204], ["Point", 219, 254, 313], ["Mid", 328, 365, 407],
  ["Cen", 425, 458, 502, "empty"], ["Int", 518, 553, 582], ["Perp", 597, 633, 682], ["Tan", 699, 733, 771],
  ["Quad", 790, 824, 887], ["Knot", 903, 938, 992, "empty"], ["Vertex", 1007, 1040, 1114],
  ["Project", 1131, 1165, 1245, "off"], ["Disable", 1281, 1315, 1399, "off"],
];
const ghMenu = [
  ["File", 1616, 1656], ["Edit", 1687, 1731], ["View", 1761, 1818], ["Display", 1849, 1934], ["Solution", 1964, 2062], ["Help", 2093, 2147],
];

function RhinoWindow() {
  return (
    <Rhino>
      <TitleBar>
        <svg width="36" height="36" viewBox="0 0 36 36">
          <path d="M0 0h36v36H0z" />
          <path d="M1 18c3-4 5-7 6-15 3 4 4 7 3 11l6 2-3 5 6 5 11-11-3 11 5-3-5 11-5 2-4-6-12-4-5-6z" fill="#fff" />
          <path d="M12 22l6 7-2-7z" />
          <text x="25" y="15" fontSize="16" fontFamily="Roboto, sans-serif" fill="#aaa">7</text>
        </svg>
        <Fit w={808} color="#9a9a9a">CNC_Tutorial.3dm (262 KB) - Rhino 7 Educational Lab License - [Top]</Fit>
      </TitleBar>
      <LabelStrip items={rhinoMenu} h={40} bg="#fff" color="#666" />
      <Band $h={124}>
        <GripBar />
        <BandBody $pl={3} $pt={6}>
          <IconRow>
            {topIcons.map((g, i) => (
              <ToolCell key={i}><svg width="62" height="56" viewBox="0 0 62 56">{g}</svg></ToolCell>
            ))}
          </IconRow>
        </BandBody>
      </Band>
      <Band $h={122}>
        <GripBar />
        <BandBody>
          <TabStrip>
            <TabOutline width="1582" height="49" viewBox="10 217 1582 49" fill="none">
              <path d="M14 236L27 222H174Q181 222 181 229V265H1592" stroke="#b9c2d9" strokeWidth="2" />
            </TabOutline>
            <LabelStrip items={rhinoTabs} h={49} pt={1} origin={10} />
          </TabStrip>
          <BandBody $pl={3} $pt={3}>
            <IconRow>
              {mainIcons.map(([g, fly], i) => (
                <ToolCell key={i}>
                  {g ? <svg width="62" height="56" viewBox="0 0 62 56">{g}</svg> : <Wheel />}
                  {fly && <Flyout />}
                </ToolCell>
              ))}
            </IconRow>
          </BandBody>
        </BandBody>
      </Band>
      <Band $h={216}>
        <GripBar />
        <History>
          <Band $h={2} $last />
          <HistoryLines>
            {[477, 478, 479, 480].map((n) => (
              <HistoryLine key={n}>
                <Fit w={937} color="#000">{`Frame ${n} saved to disk: C:\\Users\\petra\\Desktop\\New folder\\Frame_00${n}.png`}</Fit>
              </HistoryLine>
            ))}
            <HistoryLine>
              <Fit w={724} color="#000">{"Animation saved to disk: C:\\Users\\petra\\Desktop\\New folder\\"}</Fit>
            </HistoryLine>
          </HistoryLines>
          <CommandRow>
            <Fit w={138} weight={700} color="#000">Command:</Fit>
          </CommandRow>
          <Band $h={6} $last />
        </History>
      </Band>
      <ViewFrame>
        <Model />
        <ViewBadge>
          <Fit w={48} weight={700} color="#2b3038">Top</Fit>
          <svg width="16" height="10" viewBox="0 0 16 10"><path d="M0 0h16L8 10z" fill="#222" /></svg>
        </ViewBadge>
      </ViewFrame>
      <ViewTabs>
        <TabOutline width="90" height="50" viewBox="0 1839 90 50" fill="none">
          <path d="M1 1839V1862L22 1886H78Q82 1886 82 1882V1839" stroke="#b9c2d9" strokeWidth="2" />
        </TabOutline>
        <Stops $h={46}>
          <LabelStrip items={viewTabs} h={46} />
          <Stop $gap={37} $w={22}>
            <svg width="22" height="22" viewBox="0 0 22 22">
              <path d="M9 1h4v8h8v4h-8v8H9v-8H1V9h8z" fill="#f3f3f5" stroke="#9b9b9f" strokeWidth="1.500" />
            </svg>
          </Stop>
        </Stops>
      </ViewTabs>
      <Band $h={81}>
        <GripBar />
        <Checks items={filters} h={58} origin={10} />
      </Band>
      <Band $h={60} $last>
        <GripBar />
        <Checks items={osnaps} h={58} origin={10} />
      </Band>
    </Rhino>
  );
}

function RibbonGroup({ w, h, caption, more, children }) {
  return (
    <Group $w={w} $h={h}>
      <Sections>{children}</Sections>
      <Caption $more={more}>
        {caption}
        {more && (
          <More width="16" height="20" viewBox="0 0 16 20">
            <path d="M6 1h4v9h5l-7 9-7-9h5z" fill="#9b9b9b" />
          </More>
        )}
      </Caption>
    </Group>
  );
}

const Wires = () => (
  <Layer width="3834" height="2018" viewBox="0 0 3834 2018" fill="none">
    <g stroke="rgba(0,0,0,.58)">
      <path d="M1826 837.500H2198M1826 843.800H2198M1822 1287.500H2162M1822 1294H2162M1822 1332.500H2162M1822 1339H2162" strokeWidth="4.800" />
      <path
        d={
          "M1948 1112L2198 1110.500" +
          drillSliders.map((s, i) => `M${s[3] + 8} ${885.5 + 45 * i}H2198`).join("") +
          millSliders.map((s, i) => `M${s[3] + 8} ${1380.5 + 45 * i}H2162`).join("")
        }
        strokeWidth="7.500"
      />
      <path d={wire1} strokeWidth="12" />
      <path d={wire2} strokeWidth="12" />
      <path d={wire3} strokeWidth="12" />
      <path d="M3430 1145C3555 1145 2941 1244 3068 1244" strokeWidth="9" />
    </g>
    <g stroke="#c4c1ba" strokeWidth="2.200">
      <path d={wire1} />
      <path d={wire2} />
      <path d={wire3} />
    </g>
  </Layer>
);

function Definition() {
  return (
    <World>
      <Layer width="3835" height="2018" viewBox="0 0 3835 2018">
        <path
          d={vLines.map((x) => `M${x} 447V2018`).join("") + hLines.map((y) => `M1594 ${y}H3835`).join("")}
          stroke="rgba(0,0,0,.12)"
          strokeWidth="2.500"
        />
        <path d={vLines.map((x) => `M${x} 432V443`).join("")} stroke="rgba(0,0,0,.2)" strokeWidth="2" />
      </Layer>

      <Area $x={1682} $y={790} $w={830} $h={371} $bg="#ffff00" />
      <Area $x={1677} $y={1240} $w={862} $h={551} $bg="#00ffcc" />
      <Area $x={3012} $y={1098} $w={434} $h={334} $bg="#fff" />
      <Wires />
      <Tag x={2046} y={739} w={100} tip={2096} text="Drilling" tx={2058} tw={76} />
      <Tag x={2059} y={1189} w={96} tip={2107} text="Milling" tx={2071} tw={73} />
      <Tag x={3130} y={1047} w={192} tip={3227} text="SimulateCardan" tx={3141} tw={170} />

      <JagNode $x={1696} $y={600} $w={151} $h={100} $pad="0 0 0 20px" $gap={19}>
        <EdgePins $out>
          <PinSeat><Pin $out /></PinSeat>
          <PinSeat><Pin $out /></PinSeat>
        </EdgePins>
        <JagShape width="160" height="110" viewBox="-4 -4 160 110">
          <path
            d="M9.500 0H143Q150 0 150 7V92Q150 99 143 99H0L9.500 90L0 81L9.500 72L0 63L9.500 54L0 45L9.500 36L0 27L9.500 18L0 9z"
            fill="url(#steel)"
            stroke="#2b2b2d"
            strokeWidth="2.800"
          />
        </JagShape>
        <Above><Cube w={40} h={44} /></Above>
        <Above $gap={12}>
          <NodeText w={35}>Crv</NodeText>
          <NodeText w={49}>Brep</NodeText>
        </Above>
      </JagNode>

      <Param x={1704} y={813} />
      {drillSliders.map(([name, nw, div, right, knob, value, vx, vw], i) => (
        <Slider key={i} x={1704} cy={885.5 + i * 45} {...{ name, nw, div, right, knob, value, vx, vw }} />
      ))}
      <ToggleBody>
        <NodeText w={74}>Toggle</NodeText>
        <ToggleValue>
          <Fit w={70} size={29} family={'"Liberation Mono", monospace'} color="#d0d0d0">True</Fit>
        </ToggleValue>
        <Pin $out />
      </ToggleBody>
      <Component
        x={2206} y={813} w={284} h={326} inEdge={105} mid={77}
        icon={<Router w={38} h={43} />}
        inputs={[["Lines", 53], ["ToolID", 70], ["Speed", 67], ["Zsec", 48], ["Retreate", 90], ["Infeed", 67], ["Vertical", 80]]}
        outputs={[["Info", 42], ["GCode", 73]]}
      />

      <Param x={1699} y={1263} />
      <Param x={1699} y={1308} />
      {millSliders.map(([name, nw, div, right, knob, value, vx, vw], i) => (
        <Slider key={i} x={1699} cy={1380.5 + i * 45} {...{ name, nw, div, right, knob, value, vx, vw }} />
      ))}
      <Component
        x={2170} y={1263} w={346} h={505} inEdge={169} mid={76}
        icon={<Router base w={40} h={44} />}
        inputs={[
          ["cut_polyline", 129], ["dir_polyline", 124], ["cut_type", 91], ["notches_types", 153], ["Radius", 71],
          ["Height/Input", 139], ["ToolID", 71], ["Speed", 67], ["Zsec", 48], ["Retreate", 91], ["Angle", 63],
        ]}
        outputs={[["C0", 28], ["C1", 24], ["P", 13], ["GCode", 73]]}
      />

      <Component
        x={2663} y={1171} w={265} h={145} inEdge={87} mid={76}
        icon={<Merge w={54} h={34} />}
        inputs={[["BAxis", 57], ["GCode", 73], ["GCode", 73]]}
        outputs={[["GCode", 73]]}
      />

      <Slider
        x={3034} cy={1144.5} div={3151} right={3422} name="Position" nw={86}
        knob={3398} value="1.000000" vx={3283} vw={98} round
      />
      <Message $x={3089} $y={1400} $w={284} $h={331} $pt={9} $bg="#323232" $align="center">
        {[["N6710", 70], ["G0", 29], ["X5000", 66], ["Y-2000", 75], ["Z750", 53], ["C0", 28], ["A0", 28], ["(end", 48], ["pos)", 46]].map(
          ([t, w], i) => (
            <MessageLine key={i}><NodeText w={w} color="#f0f0f0">{t}</NodeText></MessageLine>
          )
        )}
      </Message>
      <Component
        light
        x={3077} y={1173} w={310} h={235} inEdge={131} mid={76}
        icon={<Cone c="#77777c" w={44} h={46} />}
        inputs={[["GCode", 73], ["t", 7], ["Mesh", 58], ["n", 12], ["DetectTool", 117]]}
        outputs={[["tool", 42], ["GCode", 73]]}
      />

      <Message $x={3054} $y={568} $w={405} $h={451} $pt={3} $bg="#222">
        {tools.map((row, i) => <ToolRow key={i} row={row} />)}
      </Message>
      <JagNode $x={3041} $y={507} $w={441} $h={65} $pad="0 0 0 18px" $gap={14}>
        <EdgePins>
          <PinSeat><Pin /></PinSeat>
        </EdgePins>
        <JagShape width="450" height="74" viewBox="-4 -4 450 74">
          <path
            d="M8 0H431L440 9L429 18L440 27.500L429 36.500L440 46L429 55L440 64H8Q1 64 1 57V7Q1 0 8 0z"
            fill="url(#steelLow)"
            stroke="#2b2b2d"
            strokeWidth="2.800"
          />
        </JagShape>
        <Above><NodeText w={342}>Folder_and_File_Name_of_Tools</NodeText></Above>
        <Above><ToolCase w={47} h={48} /></Above>
      </JagNode>

      <CornerDial width="160" height="158" viewBox="0 0 480 474">
        <path d="M107 175l48-3 4 40-35 5zM148 294c-20-4-16-52 0-80 8-20 20-28 38-20 0-34 22-38 38-34 2-22 32-20 40-4v60z" />
        <circle cx="287" cy="293" r="136" fill="#fff" stroke="#333" strokeWidth="7" />
        <circle cx="287" cy="293" r="126" fill="url(#dial)" />
        <path d="M336 174v46l36-24zM168 240l46 6-20-40zM240 366l-2 44-38-24zM360 340l44 4-22 36z" fill="#fff" />
      </CornerDial>
      <Dock>
        <HexButton>C:/</HexButton>
        <HexButton>✖</HexButton>
        <Dots />
      </Dock>
    </World>
  );
}

function GrasshopperWindow() {
  return (
    <Grasshopper>
      <WindowTop />
      <GhTitle>
        <Fit w={340} color="#111">Grasshopper - CNC_Tutorial*</Fit>
        <Controls>
          <svg width="21" height="21" viewBox="0 0 21 21"><path d="M0 10.500h21" stroke="#000" strokeWidth="2" /></svg>
          <svg width="21" height="21" viewBox="0 0 21 21"><path d="M1 1h19v19H1z" fill="none" stroke="#000" strokeWidth="2" /></svg>
          <svg width="21" height="21" viewBox="0 0 21 21"><path d="M1 1l19 19M20 1L1 20" stroke="#000" strokeWidth="2" /></svg>
        </Controls>
      </GhTitle>
      <GhMenu>
        <LabelStrip items={ghMenu} h={59} pt={4} origin={1594} color="#111" />
        <Owner><Fit w={155} color="#111">CNC_Tutorial</Fit></Owner>
      </GhMenu>
      <GhTabs>
        {tabIcons.map((g, i) => (
          <GhTab key={i}><svg width="32" height="32" viewBox="0 0 32 32">{g}</svg></GhTab>
        ))}
        {tabLetters.map((l, i) => (
          <GhTab key={i} $active={l === "R"}>
            {l === "R" && (
              <TabShape width="83" height="53" viewBox="0 0 83 53">
                <path d="M0 53Q9 50 9 38V12Q9 1 20 1H62Q73 1 73 12V38Q73 50 83 53z" fill="#fff" />
                <path d="M0 51Q9 50 9 38V12Q9 1 20 1H62Q73 1 73 12V38Q73 50 83 51" fill="none" stroke="#8f8f8f" strokeWidth="2" />
              </TabShape>
            )}
            <Letter>{l}</Letter>
          </GhTab>
        ))}
      </GhTabs>
      <Ribbon>
        <RibbonGroup w={537} h={163} caption="Robot/CNC" more>
          <Section $w={139} $cols={2} $pl={1}>
            <Slot>{ribbonIcons.mill}</Slot>
            <Slot>{ribbonIcons.tri}</Slot>
            <Slot>{ribbonIcons.pen}</Slot>
          </Section>
          <Section $w={148} $cols={2} $pl={9}>
            <Slot>{ribbonIcons.path}</Slot>
            <Slot>{ribbonIcons.line}</Slot>
            <Slot>{ribbonIcons.router}</Slot>
          </Section>
          <Section $w={85} $cols={1} $pl={11}><Slot>{ribbonIcons.saw}</Slot></Section>
          <Section $w={85} $cols={1} $pl={11}><Slot>{ribbonIcons.drill}</Slot></Section>
          <Section $w={76} $cols={1} $pl={11} $end><Slot>{ribbonIcons.pencil}</Slot></Section>
        </RibbonGroup>
        <RibbonGroup w={71} h={99} caption="Tool">
          <Section $w={67} $cols={1} $cell={67} $end><Slot $w={67}>{ribbonIcons.tool}</Slot></Section>
        </RibbonGroup>
        <RibbonGroup w={72} h={99} caption="Util">
          <Section $w={68} $cols={1} $cell={68} $end><Slot $w={68}>{ribbonIcons.util}</Slot></Section>
        </RibbonGroup>
        <RibbonGroup w={198} h={163} caption="View" more>
          <Section $w={194} $cols={3} $cell={63} $pl={2} $end>
            <Slot>{ribbonIcons.target}</Slot>
            <Slot>{ribbonIcons.axes}</Slot>
            <Slot>{ribbonIcons.cone}</Slot>
            <Slot>{ribbonIcons.cube}</Slot>
            <Slot>{ribbonIcons.coneDark}</Slot>
          </Section>
        </RibbonGroup>
      </Ribbon>
      <Toolbar>
        <Tool $gap={6} $w={44}>
          <svg width="44" height="52" viewBox="0 0 44 52">
            <path d="M5 20V12l9-10h24v22H5z" fill="#f1f1f1" stroke="#444" strokeWidth="2" />
            <path d="M1 50V25h5l3-5h15l3-3h16v33z" fill="#7ccb35" stroke="#2c6b0c" strokeWidth="2" />
            <path d="M3 36h38V28H9z" fill="#c9f08a" opacity=".6" />
          </svg>
        </Tool>
        <Tool $gap={14} $w={51}>
          <svg width="51" height="52" viewBox="0 0 51 52">
            <path d="M2 1h47v49H7l-5-5z" fill="#1f6fe8" stroke="#0c2a78" strokeWidth="2" />
            <rect x="10" y="3" width="31" height="22" fill="#eef0f4" stroke="#9aa" />
            <path d="M14 9h23M14 14h23M14 19h23" stroke="#c3c6cc" strokeWidth="2" />
            <rect x="12" y="33" width="27" height="17" fill="#b9bcc4" stroke="#0c2a78" strokeWidth="1.500" />
            <rect x="16" y="36" width="8" height="12" fill="#1147b8" />
          </svg>
        </Tool>
        <Rule $gap={9} />
        <ZoomBox>
          <Fit w={65} color="#111">225%</Fit>
          <svg width="14" height="10" viewBox="0 0 14 10"><path d="M1 1l6 6 6-6" fill="none" stroke="#333" strokeWidth="1.500" /></svg>
        </ZoomBox>
        <Tool $gap={6} $w={50}>
          <svg width="50" height="50" viewBox="0 0 50 50">
            <path d="M3.500 18V3.500h15M31.500 3.500h15V18M46.500 32v14.500h-15M18.500 46.500h-15V32" fill="none" stroke="#1d1d1d" strokeWidth="7" />
            <path d="M19 19l4 1 2 3 2-3 4-1-1 4-3 2 3 2 1 4-4-1-2-3-2 3-4 1 1-4 3-2-3-2z" />
          </svg>
        </Tool>
        <Drop $gap={14} />
        <Tool $gap={13} $w={50}>
          <svg width="50" height="34" viewBox="0 0 50 34">
            <path d="M1 18C12-3 38-3 49 18 38 37 12 37 1 18z" fill="#f4f7fa" stroke="#333" strokeWidth="2.500" />
            <circle cx="25" cy="17" r="13" fill="#46b6ea" stroke="#123" strokeWidth="2" />
            <circle cx="25" cy="17" r="6" fill="#07142b" />
            <circle cx="21" cy="12" r="3" fill="#fff" />
          </svg>
        </Tool>
        <Drop $gap={12} />
        <Tool $gap={12} $w={50}>
          <svg width="50" height="48" viewBox="0 0 50 48">
            <path d="M1 12c10 6-2 22 3 30 6 6 12 2 17-2" fill="none" stroke="#5a1414" strokeWidth="3" />
            <path d="M45 0q5 14-1 24L34 38l-15-11L31 12z" fill="#ea2c2c" stroke="#a01616" strokeWidth="1" />
            <path d="M18 28l14 9-15 8z" fill="#e2b34d" />
            <path d="M36 12L26 25" stroke="#ffb3a8" strokeWidth="4" />
          </svg>
        </Tool>
        <Push />
        <Tool $w={40}>
          <svg width="40" height="50" viewBox="0 0 40 50">
            <path d="M20 1q12 2 14 10l2 12q-8 8-16 8T2 28L6 12Q10 3 20 1z" fill="#c9c9c9" stroke="#777" strokeWidth="1.500" />
            <ellipse cx="20" cy="15" rx="10" ry="12" fill="#ededed" />
            <path d="M2 35l6 10q12 7 24 0l6-10" fill="none" stroke="#777" strokeWidth="3" />
            <path d="M10 28l10-3 10 3 6 7-8 8H12L4 35z" fill="#2b2b2b" />
          </svg>
        </Tool>
        <Tool $gap={14} $w={50}>
          <svg width="50" height="50" viewBox="0 0 50 50">
            <path d="M20 3q5-3 12 0l12 9q4 3 3 9l-3 10q-2 4-6 7L24 47q-5 3-10-1L5 38q-3-3-1-9z" fill="#f4f4f4" stroke="#444" strokeWidth="2" />
            <ellipse cx="34" cy="17" rx="8" ry="12" fill="none" stroke="#555" strokeWidth="2" transform="rotate(-35 34 17)" />
            <ellipse cx="15" cy="33" rx="8" ry="12" fill="none" stroke="#999" strokeWidth="2" transform="rotate(-35 15 33)" />
          </svg>
        </Tool>
        <Chosen><Solid c="#c01208" d="#5a0a04" /></Chosen>
        <Rule $gap={7} />
        <Tool $gap={14} $w={46}>
          <svg width="46" height="50" viewBox="0 0 46 50">
            <path d="M2 4q12 10 10 24 2 12 20 20" fill="none" stroke="#555" strokeWidth="4" opacity=".5" />
            <path d="M18 5q8-6 16 0l9 8q3 4 1 10l-4 13q-4 8-14 9l-9-5q-4-7-1-17z" fill="#109a95" stroke="#06514f" strokeWidth="2" />
            <ellipse cx="33" cy="17" rx="6" ry="9" fill="#06716d" transform="rotate(-35 33 17)" />
          </svg>
        </Tool>
        <Tool $gap={8} $w={50}>
          <svg width="50" height="50" viewBox="0 0 50 50">
            <path d="M3 20l36 28-12 1q-5 2-9-2L4 38q-4-8-1-18z" fill="#dcdcdc" stroke="#888" strokeWidth="1.500" />
            <path d="M18 5q6-5 12-2l15 10q4 3 3 9l-6 16-4 4L8 17z" fill="#5ea314" stroke="#2c5a05" strokeWidth="2" />
            <ellipse cx="34" cy="17" rx="6" ry="10" fill="#3a7208" transform="rotate(-35 34 17)" />
            <path d="M2 12l38 34" stroke="#222" strokeWidth="2" />
          </svg>
        </Tool>
        <Tool $gap={10} $w={46}>
          <svg width="46" height="46" viewBox="0 0 46 46">
            <circle cx="23" cy="23" r="21.500" fill="#dedede" stroke="#6b5440" strokeWidth="1.800" />
            <path d="M23 2a21 21 0 0 0 0 42z" fill="#e88012" />
            <path d="M6 35a21 21 0 0 0 17 9V30z" fill="#a8420a" />
            <circle cx="16" cy="15" r="6" fill="#ffc88a" opacity=".8" />
          </svg>
        </Tool>
        <Rule $gap={10} />
        <Tool $gap={9} $w={42}>
          <svg width="42" height="42" viewBox="0 0 42 42">
            <path d="M21 1l14 5 6 14-5 14-15 7-15-6L1 21 6 7z" fill="#7dbdf2" stroke="#2a4a9b" strokeWidth="2.500" />
            <path d="M8 10l12-5-5 20z" fill="#fff" opacity=".5" />
          </svg>
        </Tool>
        <Drop $gap={8} />
        <Tool $w={8} />
      </Toolbar>
      <Canvas>
        <Hatch />
        <Definition />
      </Canvas>
    </Grasshopper>
  );
}

export default function App() {
  return (
    <>
      <GlobalStyle />
      <HiddenDefs><Defs /></HiddenDefs>
      <Screen>
        <RhinoWindow />
        <GrasshopperWindow />
      </Screen>
    </>
  );
}
